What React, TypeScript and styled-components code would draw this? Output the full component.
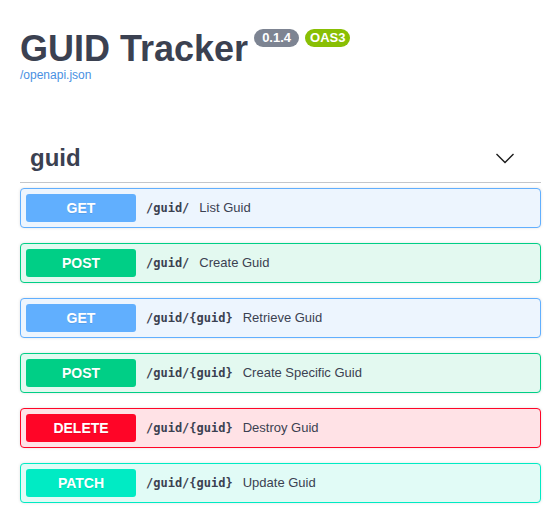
import * as React from 'react'
import styled, { createGlobalStyle } from 'styled-components'

type Method = 'GET' | 'POST' | 'DELETE' | 'PATCH'

type Operation = {
  method: Method
  path: string
  summary: string
}

const METHOD_COLOR: Record<Method, { main: string; tint: string }> = {
  GET: { main: '#61affe', tint: '#edf5fe' },
  POST: { main: '#00cf86', tint: '#e3f9f0' },
  DELETE: { main: '#ff0527', tint: '#ffe2e6' },
  PATCH: { main: '#00ebc4', tint: '#e1fbf6' },
}

const OPERATIONS: Operation[] = [
  { method: 'GET', path: '/guid/', summary: 'List Guid' },
  { method: 'POST', path: '/guid/', summary: 'Create Guid' },
  { method: 'GET', path: '/guid/{guid}', summary: 'Retrieve Guid' },
  { method: 'POST', path: '/guid/{guid}', summary: 'Create Specific Guid' },
  { method: 'DELETE', path: '/guid/{guid}', summary: 'Destroy Guid' },
  { method: 'PATCH', path: '/guid/{guid}', summary: 'Update Guid' },
]

const GlobalStyle = createGlobalStyle`
  body {
    margin: 0;
    background: #fff;
    font-family: "Liberation Sans", Arial, sans-serif;
    color: #3b4151;
  }
`

const Chevron: React.FC = () => (
  <svg width="20" height="20" viewBox="0 0 20 20">
    <polyline points="1.5,6 10,14.5 18.5,6" fill="none" stroke="#1b1b1b" strokeWidth="1.4" />
  </svg>
)

export default function App() {
  return (
    <Page>
      <GlobalStyle />
      <Info>
        <TitleRow>
          <Title>GUID Tracker</Title>
          <Stamp color="#7d8492" wide>0.1.4</Stamp>
          <Stamp color="#89bf04">OAS3</Stamp>
        </TitleRow>
        <SpecLink href="#">/openapi.json</SpecLink>
      </Info>

      <TagHeader>
        <TagName>guid</TagName>
        <ExpandButton>
          <Chevron />
        </ExpandButton>
      </TagHeader>

      <OperationList>
        {OPERATIONS.map((op, i) => (
          <OpBlock key={i} method={op.method}>
            <MethodBadge method={op.method}>{op.method}</MethodBadge>
            <OpPath>{op.path}</OpPath>
            <OpSummary>{op.summary}</OpSummary>
          </OpBlock>
        ))}
      </OperationList>
    </Page>
  )
}

const Page = styled.div`
  padding: 31px 10px 20px 20px;
`

const Info = styled.div`
  display: flex;
  flex-direction: column;
  align-items: flex-start;
`

const TitleRow = styled.div`
  display: flex;
  align-items: flex-start;
`

const Title = styled.h2`
  margin: 0;
  font-size: 36px;
  line-height: 36px;
  font-weight: 700;
  color: #3b4151;
`

const Stamp = styled.span<{ color: string; wide?: boolean }>`
  margin: -2px 0 0 6px;
  padding: 2px ${p => (p.wide ? 8 : 5)}px;
  border-radius: 57px;
  background: ${p => p.color};
  color: #fff;
  font-size: 13px;
  line-height: 14px;
  font-weight: 700;
`

const SpecLink = styled.a`
  margin-top: 2px;
  font-size: 12px;
  line-height: 13px;
  color: #4990e2;
  text-decoration: none;
`

const TagHeader = styled.div`
  display: flex;
  align-items: center;
  margin-top: 52px;
  padding: 10px 20px 10px 10px;
  border-bottom: 1px solid rgba(59, 65, 81, 0.3);
`

const TagName = styled.h3`
  flex: 1;
  margin: 0;
  font-size: 24px;
  font-weight: 700;
  line-height: 27.6px;
  color: #3b4151;
`

const ExpandButton = styled.button`
  display: flex;
  padding: 0 6px 0 0;
  border: none;
  background: none;
`

const OperationList = styled.div`
  display: flex;
  flex-direction: column;
  gap: 15px;
  margin-top: 5px;
`

const OpBlock = styled.div<{ method: Method }>`
  display: flex;
  align-items: center;
  padding: 5px;
  border: 1px solid ${p => METHOD_COLOR[p.method].main};
  border-radius: 4px;
  background: ${p => METHOD_COLOR[p.method].tint};
  box-shadow: 0 0 3px rgba(0, 0, 0, 0.12);
`

const MethodBadge = styled.span<{ method: Method }>`
  width: 110px;
  padding: 6px 0;
  border-radius: 3px;
  background: ${p => METHOD_COLOR[p.method].main};
  color: #fff;
  font-size: 14px;
  line-height: 16px;
  font-weight: 700;
  text-align: center;
  text-shadow: 0 1px 0 rgba(0, 0, 0, 0.1);
`

const OpPath = styled.span`
  padding: 0 10px;
  font-family: "DejaVu Sans Mono", "Liberation Mono", monospace;
  font-size: 12px;
  font-weight: 700;
  color: #3b4151;
`

const OpSummary = styled.span`
  font-size: 13px;
  color: #3b4151;
`
